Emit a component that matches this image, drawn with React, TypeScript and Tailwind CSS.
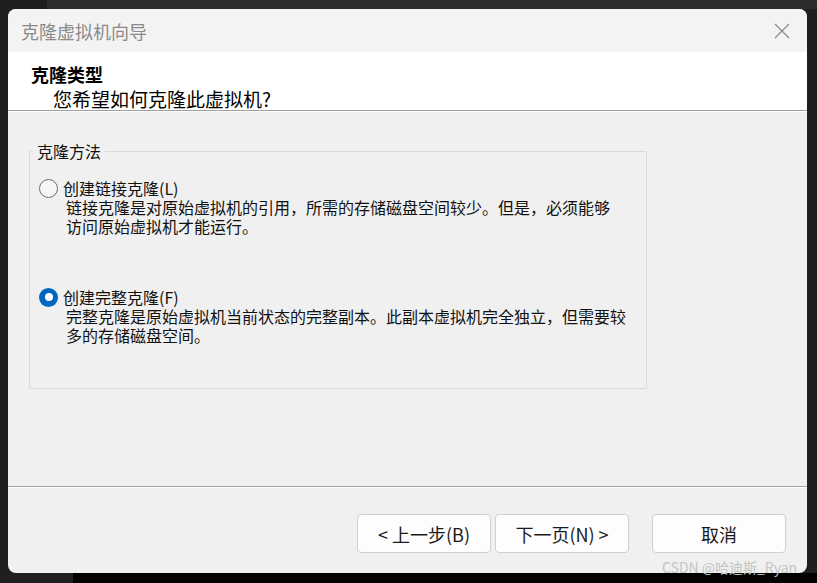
import React from "react";

const FONT = {
  fontFamily: '"Noto Sans CJK SC", "Microsoft YaHei", "Noto Sans", sans-serif',
};

function Radio({ checked }: { checked: boolean }) {
  if (checked) {
    return (
      <span className="flex h-[19px] w-[19px] shrink-0 items-center justify-center rounded-full bg-[#0067c0]">
        <span className="h-[8px] w-[8px] rounded-full bg-white" />
      </span>
    );
  }
  return (
    <span className="h-[19px] w-[19px] shrink-0 rounded-full border border-[#6e6e6e] bg-[#f6f6f6]" />
  );
}

function Option({
  checked,
  label,
  lines,
}: {
  checked: boolean;
  label: string;
  lines: string[];
}) {
  return (
    <div className="flex flex-col">
      <div className="flex h-[20px] items-center">
        <Radio checked={checked} />
        <span className="ml-[5px] text-[16px] leading-[20px] text-[#111]">{label}</span>
      </div>
      <div className="pl-[27px] text-[16px] leading-[19px] text-[#111]">
        {lines.map((l) => (
          <div key={l} className="whitespace-nowrap">
            {l}
          </div>
        ))}
      </div>
    </div>
  );
}

function Button({ children }: { children: React.ReactNode }) {
  return (
    <button className="flex h-[39px] w-[134px] items-center justify-center rounded-[4px] border border-[#d0d0d0] bg-[#fdfdfd] text-[18px] leading-none text-[#1a1a1a]">
      {children}
    </button>
  );
}

export default function App() {
  return (
    <div
      className="relative h-[583px] w-[817px] overflow-hidden bg-[#1f1f1f] pb-[10px] pl-[8px] pr-[10px] pt-[9px]"
      style={FONT}
    >
      <div className="flex h-full w-full flex-col overflow-hidden rounded-[8px] bg-[#f0f0f0]">
        {/* title bar */}
        <div className="flex h-[43px] shrink-0 items-center justify-between bg-[#f3f3f3] pl-[13px] pr-[17px]">
          <span className="text-[18px] leading-none text-[#8a8a8a]">克隆虚拟机向导</span>
          <svg width="16" height="16" viewBox="0 0 16 16">
            <path d="M1 1 L15 15 M15 1 L1 15" stroke="#8a8a8a" strokeWidth="1.2" fill="none" />
          </svg>
        </div>
        {/* header */}
        <div className="flex h-[58px] shrink-0 flex-col bg-white pl-[23px] pt-[11px]">
          <div className="text-[18px] font-bold leading-[22px] text-black">克隆类型</div>
          <div className="pl-[22px] pt-[2px] text-[19px] leading-[23px] text-black">
            您希望如何克隆此虚拟机?
          </div>
        </div>
        <div className="h-px shrink-0 bg-[#a0a0a0]" />
        <div className="h-px shrink-0 bg-white" />
        {/* content */}
        <div className="flex h-[374px] shrink-0 flex-col pl-[21px] pt-[29px]">
          <fieldset className="w-[618px] rounded-[2px] border border-[#dadada] pb-[43px] pl-[9px] pt-[17px]">
            <legend className="-ml-[6px] px-[4px] text-[16px] leading-[20px] text-[#111]">克隆方法</legend>
            <div className="flex flex-col gap-[51px]">
              <Option
                checked={false}
                label="创建链接克隆(L)"
                lines={[
                  "链接克隆是对原始虚拟机的引用，所需的存储磁盘空间较少。但是，必须能够",
                  "访问原始虚拟机才能运行。",
                ]}
              />
              <Option
                checked={true}
                label="创建完整克隆(F)"
                lines={[
                  "完整克隆是原始虚拟机当前状态的完整副本。此副本虚拟机完全独立，但需要较",
                  "多的存储磁盘空间。",
                ]}
              />
            </div>
          </fieldset>
        </div>
        <div className="h-px shrink-0 bg-[#a0a0a0]" />
        <div className="h-px shrink-0 bg-white" />
        {/* footer */}
        <div className="flex flex-1 justify-end pr-[21px] pt-[26px]">
          <div className="flex gap-[4px]">
            <Button>&lt; 上一步(B)</Button>
            <Button>下一页(N) &gt;</Button>
          </div>
          <div className="ml-[23px]">
            <Button>取消</Button>
          </div>
        </div>
      </div>
      <div className="absolute bottom-[574px] left-[47px] right-0 top-0 bg-[#2d2d2d]" />
      <div className="absolute bottom-0 left-[73px] right-0 h-[10px] bg-black" />
      <div className="absolute left-[662px] top-[557px] whitespace-nowrap text-[14px] leading-[20px] text-[#c4c4c4]">
        CSDN @哈迪斯_Ryan
      </div>
    </div>
  );
}
